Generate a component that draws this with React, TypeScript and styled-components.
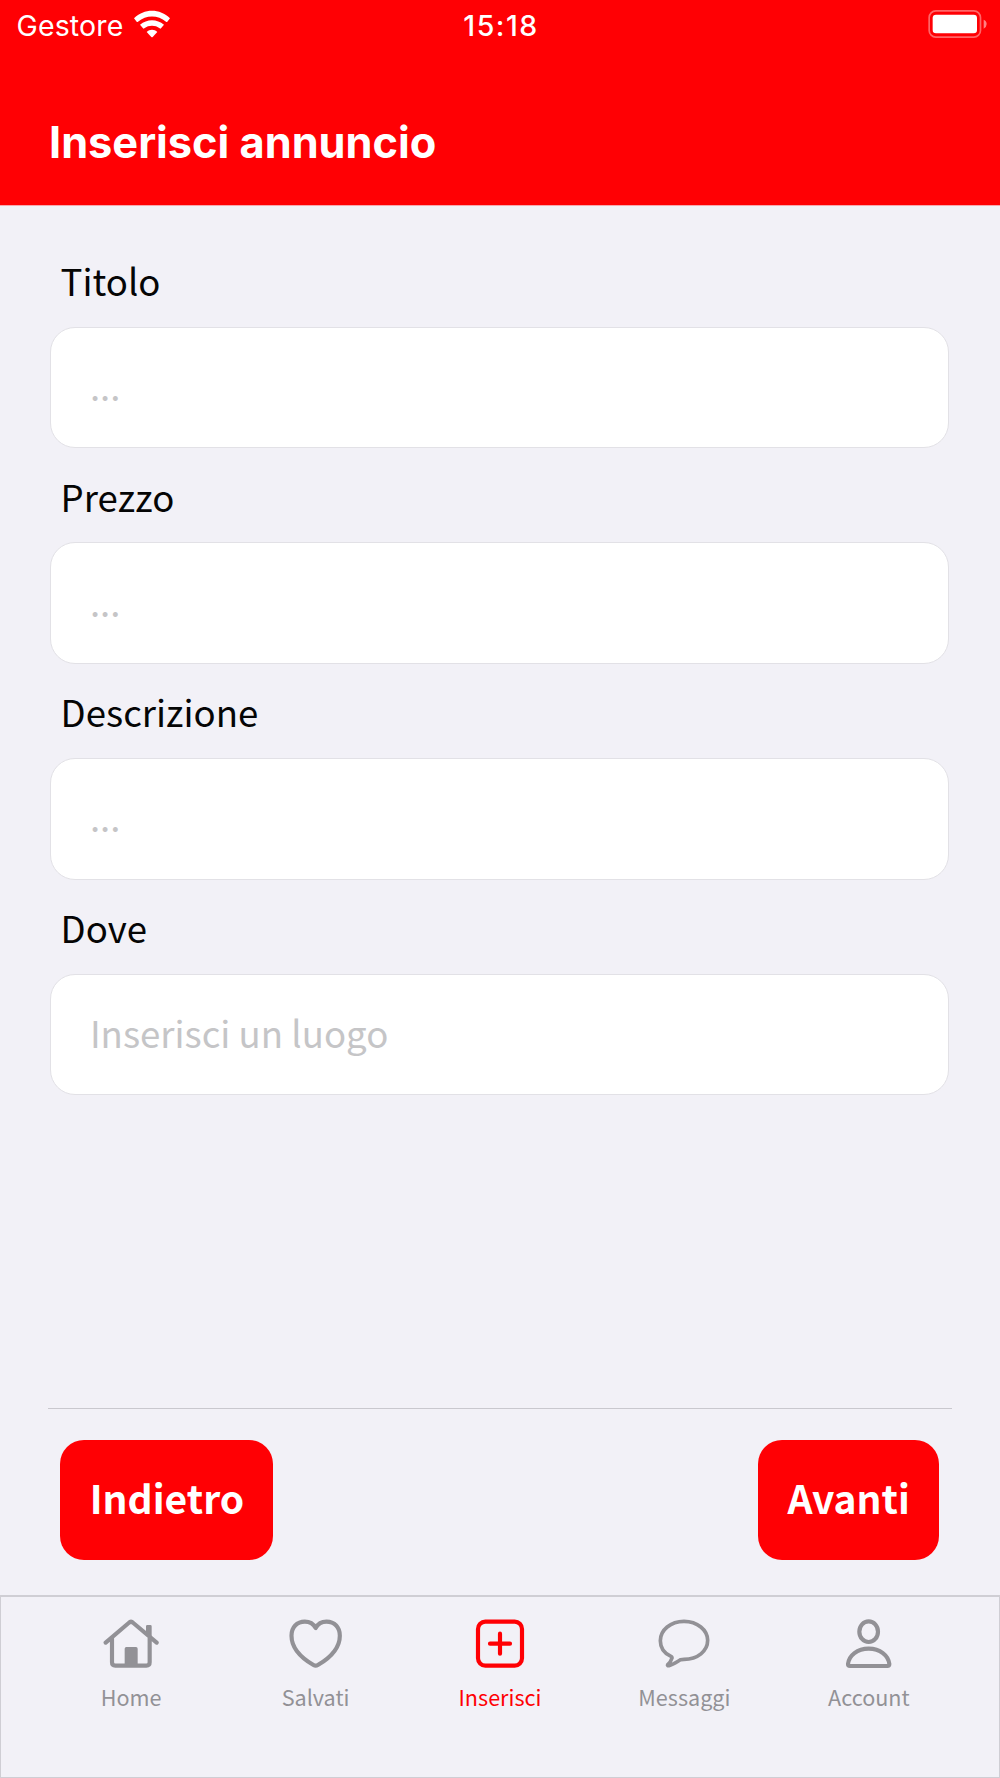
import React from "react";
import styled, { createGlobalStyle } from "styled-components";

const RED = "#ff0004";
const PAPER = "#f2f1f7";
const GRAY = "#929196";

const Global = createGlobalStyle`
  *, *::before, *::after { box-sizing: border-box; }
  body { margin: 0; background: ${PAPER}; }
`;

const Screen = styled.div`
  width: 1000px;
  height: 1778px;
  display: flex;
  flex-direction: column;
  overflow: hidden;
  background: ${PAPER};
  font-family: "Noto Sans CJK JP", "Noto Sans", sans-serif;
`;

const Header = styled.header`
  height: 206px;
  flex: none;
  background: ${RED};
  border-bottom: 1px solid #f7a8ae;
  color: #fff;
`;

const StatusBar = styled.div`
  display: grid;
  grid-template-columns: 1fr auto 1fr;
  align-items: center;
  height: 50px;
  padding: 0 13px 0 16.5px;
  font-family: Inter, sans-serif;
  font-size: 28.5px;
`;

const Carrier = styled.div`
  display: flex;
  align-items: center;
  gap: 9.5px;
  letter-spacing: 0.15px;
`;

const Clock = styled.div`
  font-weight: 500;
  letter-spacing: 1.5px;
  margin-right: 1.5px;
`;

const WifiIcon = styled.svg`
  width: 38px;
  height: 28px;
  margin-top: -3px;
`;

const BatteryIcon = styled.svg`
  width: 59px;
  height: 28px;
  justify-self: end;
  margin-top: -2px;
`;

const Title = styled.h1`
  margin: 64px 0 0 49px;
  font: 700 43.3px/56px Inter, sans-serif;
  letter-spacing: 0;
  white-space: nowrap;
`;

const Form = styled.main`
  flex: 1;
  padding: 47px 51px 0 50.4px;
`;

const Field = styled.label`
  display: block;
  height: 215.7px;
`;

const FieldName = styled.span`
  display: block;
  height: 73.8px;
  padding-left: 10.2px;
  font-size: 36.6px;
  line-height: 56px;
  color: #050505;
`;

const Input = styled.input`
  display: block;
  width: 100%;
  height: 121.4px;
  padding: 0 0 4px 38.5px;
  border: 1px solid #e2e1e6;
  border-radius: 25px;
  background: #fff;
  outline: none;
  font-family: inherit;
  font-size: 36.6px;
  &::placeholder { color: #c5c5c7; opacity: 1; }
`;

const Actions = styled.div`
  display: flex;
  justify-content: space-between;
  flex: none;
  height: 187px;
  margin: 0 48.5px 0 48px;
  padding: 31.4px 12.3px 0 12.4px;
  border-top: 1px solid #c9c8ce;
`;

const ActionButton = styled.button<{ $width: number }>`
  width: ${(p) => p.$width}px;
  height: 120px;
  padding: 0 0 7px;
  border: 0;
  border-radius: 24px;
  background: ${RED};
  color: #fff;
  font-family: inherit;
  font-size: 39px;
  font-weight: 700;
`;

const TabBar = styled.nav`
  display: flex;
  flex: none;
  height: 183px;
  padding: 22px 38px 0;
  border: 1px solid #cfced4;
  border-top-width: 2px;
`;

const Tab = styled.a<{ $active?: boolean }>`
  flex: 1;
  display: flex;
  flex-direction: column;
  align-items: center;
  color: ${(p) => (p.$active ? RED : GRAY)};
  font-size: 21.6px;
  line-height: 32px;
`;

const TabIcon = styled.svg`
  width: 56px;
  height: 50px;
  margin-bottom: 12px;
  fill: none;
  stroke: currentColor;
  stroke-width: 12.5;
  stroke-linecap: round;
  stroke-linejoin: round;
`;

const fields = [
  { name: "Titolo", hint: "..." },
  { name: "Prezzo", hint: "..." },
  { name: "Descrizione", hint: "..." },
  { name: "Dove", hint: "Inserisci un luogo" },
];

const tabs = [
  {
    name: "Home",
    box: "310 103 168 150",
    art: (
      <>
        <path d="M318 174 387 115Q394 108 401 115L471 174M337 160V233Q337 243 347 243H440Q450 243 450 233V160" />
        <path d="M375 243V192Q375 187 380 187H409Q414 187 414 192V243ZM439 145V125Q439 121 443 121H452Q456 121 456 125V162Z" fill="currentColor" stroke="none" />
      </>
    ),
  },
  {
    name: "Salvati",
    box: "862.5 103 168 150",
    art: <path d="M945.5 130C939 118 928 111 913 111C889 111 873 128 873 153C873 185 898 217 939 241Q945.5 245 952 241C993 217 1018 185 1018 153C1018 128 1002 111 978 111C963 111 952 118 945.5 130Z" />,
  },
  {
    name: "Inserisci",
    box: "126 103 168 150",
    active: true,
    art: (
      <>
        <rect x="144" y="111" width="132" height="132" rx="22" />
        <path d="M210 147V207M180 177H240" />
      </>
    ),
  },
  {
    name: "Messaggi",
    box: "679 103 168 150",
    art: <path strokeWidth="11" d="M763 110C723 110 692 136 692 168C692 189 704 206 724 215Q729 218 726 222C724 229 719 236 714 240Q712 244 718 243C731 240 744 230 753 225Q756 224 763 224C804 224 834 199 834 167C834 136 803 110 763 110Z" />,
  },
  {
    name: "Account",
    box: "303 103 168 150",
    art: (
      <>
        <ellipse cx="386" cy="141" rx="28" ry="31" />
        <path d="M330 244Q324 244 324 238C327 212 352 192 386 192C420 192 445 212 448 238Q448 244 442 244Z" />
      </>
    ),
  },
];

export default function App() {
  return (
    <Screen>
      <Global />
      <Header>
        <StatusBar>
          <Carrier>
            Gestore
            <WifiIcon viewBox="0 0 114 84" fill="#fff">
              <path d="M3 25C33 -5 81 -5 111 25L103 35Q101 37 99 35C75 14 39 14 15 35Q13 37 11 35Z" />
              <path d="M21 44C42 26 72 26 93 44L84 55Q82 57 80 55C67 45 47 45 34 55Q32 57 30 55Z" />
              <path d="M41 66C50 57 64 57 73 66L59 81Q57 83 55 81Z" />
            </WifiIcon>
          </Carrier>
          <Clock>15:18</Clock>
          <BatteryIcon viewBox="0 0 177 84">
            <rect x="3.5" y="2.5" width="154" height="79" rx="20" fill="none" stroke="#fff" strokeOpacity=".4" strokeWidth="5" />
            <rect x="14" y="14" width="133" height="56" rx="10" fill="#fff" />
            <path d="M167 29Q176 33 176 42Q176 51 167 56Z" fill="#fff" fillOpacity=".5" />
          </BatteryIcon>
        </StatusBar>
        <Title>Inserisci annuncio</Title>
      </Header>
      <Form>
        {fields.map((f) => (
          <Field key={f.name}>
            <FieldName>{f.name}</FieldName>
            <Input placeholder={f.hint} />
          </Field>
        ))}
      </Form>
      <Actions>
        <ActionButton $width={213}>Indietro</ActionButton>
        <ActionButton $width={181}>Avanti</ActionButton>
      </Actions>
      <TabBar>
        {tabs.map((t) => (
          <Tab key={t.name} $active={t.active}>
            <TabIcon viewBox={t.box}>{t.art}</TabIcon>
            {t.name}
          </Tab>
        ))}
      </TabBar>
    </Screen>
  );
}
